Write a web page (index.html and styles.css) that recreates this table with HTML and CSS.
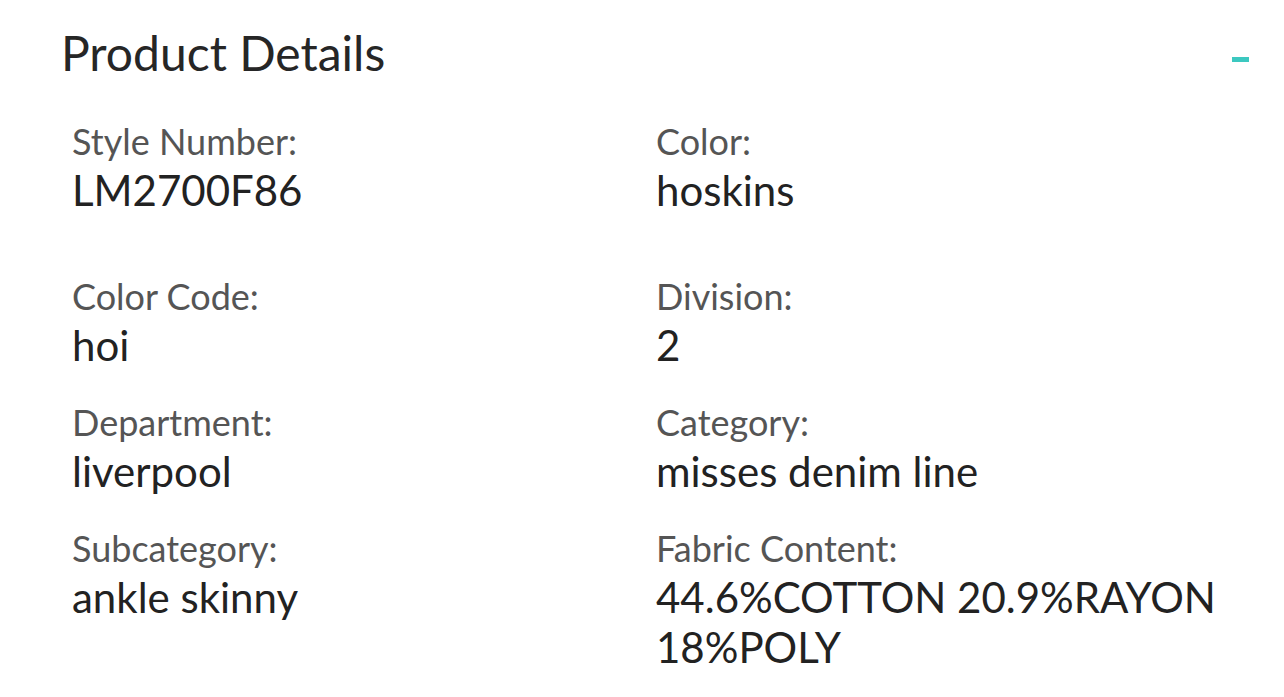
FILE: index.html
```html
<!DOCTYPE html>
<html lang="en">
<head>
    <title>Product Details</title>
    <meta charset="UTF-8">
    <link rel="stylesheet" href="styles.css">
</head>
<body>
    <div class="panel">
        <div class="panel-head">
            <h1 class="panel-title">Product Details</h1>
            <span class="toggle"></span>
        </div>
        <div class="details">
            <div class="field first">
                <div class="label">Style Number:</div>
                <div class="value">LM2700F86</div>
            </div>
            <div class="field first">
                <div class="label">Color:</div>
                <div class="value">hoskins</div>
            </div>
            <div class="field">
                <div class="label">Color Code:</div>
                <div class="value">hoi</div>
            </div>
            <div class="field">
                <div class="label">Division:</div>
                <div class="value">2</div>
            </div>
            <div class="field">
                <div class="label">Department:</div>
                <div class="value">liverpool</div>
            </div>
            <div class="field">
                <div class="label">Category:</div>
                <div class="value">misses denim line</div>
            </div>
            <div class="field">
                <div class="label">Subcategory:</div>
                <div class="value">ankle skinny</div>
            </div>
            <div class="field">
                <div class="label">Fabric Content:</div>
                <div class="value">44.6%COTTON 20.9%RAYON 18%POLY</div>
            </div>
        </div>
    </div>
</body>
</html>
```

FILE: styles.css
```css
body {
    margin: 0;
    background: #ffffff;
    font-family: Lato, "Liberation Sans", sans-serif;
}

.panel {
    padding: 21px 35px 0 61px;
}

.panel-head {
    display: flex;
    justify-content: space-between;
    align-items: flex-start;
}

.panel-title {
    margin: 0;
    font-size: 48px;
    font-weight: 400;
    color: #262626;
    line-height: 64px;
}

.toggle {
    width: 17px;
    height: 5px;
    margin-top: 36px;
    background: #3cc8c0;
}

.details {
    display: grid;
    grid-template-columns: 584px 1fr;
    padding: 32px 0 0 11px;
}

.field {
    margin-bottom: 28px;
}

.field.first {
    margin-bottom: 57px;
}

.label {
    font-size: 36px;
    line-height: 48px;
    color: #555555;
}

.value {
    font-size: 42px;
    line-height: 50px;
    color: #222222;
}
```
